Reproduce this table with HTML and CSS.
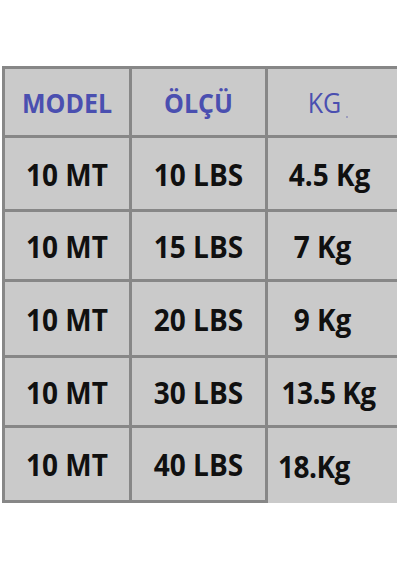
FILE: index.html
```html
<!DOCTYPE html>
<html lang="tr">
<head>
<meta charset="utf-8">
<title>Ölçü Tablosu</title>
<link rel="stylesheet" href="styles.css">
</head>
<body>
<div class="chart">
  <div class="cell head"><span class="txt">MODEL</span></div>
  <div class="cell head head-mid"><span class="txt">ÖLÇÜ</span></div>
  <div class="cell head head-kg last-col"><span class="txt">KG</span><span class="dot"></span></div>

  <div class="cell"><span class="txt">10 MT</span></div>
  <div class="cell"><span class="txt">10 LBS</span></div>
  <div class="cell last-col kg-1"><span class="txt">4.5 Kg</span></div>

  <div class="cell"><span class="txt">10 MT</span></div>
  <div class="cell"><span class="txt">15 LBS</span></div>
  <div class="cell last-col kg-2"><span class="txt">7 Kg</span></div>

  <div class="cell"><span class="txt">10 MT</span></div>
  <div class="cell"><span class="txt">20 LBS</span></div>
  <div class="cell last-col kg-2"><span class="txt">9 Kg</span></div>

  <div class="cell"><span class="txt">10 MT</span></div>
  <div class="cell"><span class="txt">30 LBS</span></div>
  <div class="cell last-col kg-3"><span class="txt">13.5 Kg</span></div>

  <div class="cell"><span class="txt">10 MT</span></div>
  <div class="cell"><span class="txt">40 LBS</span></div>
  <div class="cell last-col last-row kg-4"><span class="txt">18.Kg</span></div>
</div>
</body>
</html>
```
FILE: styles.css
```css
html, body {
  margin: 0;
  padding: 0;
  background: #ffffff;
}

body {
  font-family: "Open Sans", "Liberation Sans", sans-serif;
  color: #101010;
}

.chart {
  margin: 66px 0 0 2px;
  width: 395px;
  display: grid;
  grid-template-columns: 127px 136px 129px;
  grid-template-rows: 69px 74px 70px 76px 70px 75px;
  border-top: 3px solid #878787;
  border-left: 3px solid #878787;
  box-sizing: border-box;
}

.cell {
  box-sizing: border-box;
  background: #cacaca;
  border-right: 3px solid #878787;
  border-bottom: 3px solid #878787;
  display: flex;
  align-items: center;
  justify-content: center;
  font-weight: 700;
  font-size: 28px;
  line-height: 1;
  white-space: nowrap;
}

.txt {
  display: inline-block;
  transform: scaleY(1.1);
}

.last-col {
  border-right: none;
}

.last-row {
  border-bottom: none;
}

.head {
  color: #4a4fb0;
  font-size: 25px;
}

.head-mid {
  font-size: 25px;
}

.head-kg {
  font-weight: 400;
  font-size: 25px;
  padding-right: 16px;
  position: relative;
}

.dot {
  position: absolute;
  left: 78px;
  top: 47px;
  width: 2px;
  height: 2px;
  border-radius: 50%;
  background: #8c8cb8;
}

.kg-1 {
  padding-right: 6px;
}

.kg-2 {
  padding-right: 20px;
}

.kg-3 {
  padding-right: 8px;
  letter-spacing: -0.5px;
}

.kg-4 {
  justify-content: flex-start;
  padding-left: 10px;
  letter-spacing: -0.5px;
}
```
